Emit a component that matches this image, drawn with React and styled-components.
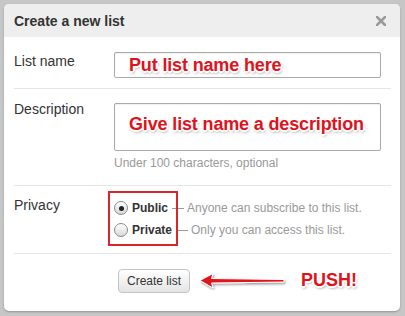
import React from 'react';
import styled, { createGlobalStyle } from 'styled-components';

const GlobalStyle = createGlobalStyle`
  html, body {
    margin: 0;
    padding: 0;
    background: #c6c6c6;
  }
  body {
    font-family: 'Liberation Sans', Arial, sans-serif;
  }
`;

const Frame = styled.div`
  width: 405px;
  height: 316px;
  box-sizing: border-box;
  padding: 4px 5px 5px 4px;
  background: #c6c6c6;
`;

const Modal = styled.div`
  height: 100%;
  background: #fff;
  border-radius: 5px;
  box-shadow: 0 1px 2px rgba(0, 0, 0, 0.25);
  overflow: hidden;
  display: flex;
  flex-direction: column;
`;

const Header = styled.div`
  height: 33px;
  flex-shrink: 0;
  background: #eeeeee;
  display: flex;
  align-items: center;
  justify-content: space-between;
  padding: 0 12px 0 10px;
`;

const Title = styled.h3`
  margin: 0;
  font-size: 14px;
  font-weight: bold;
  color: #333;
`;

const Close = styled.button`
  border: 0;
  background: none;
  padding: 0;
  width: 14px;
  height: 14px;
  display: flex;
  align-items: center;
  justify-content: center;
`;

const Body = styled.div`
  padding: 0 9px 0 10px;
`;

const Row = styled.div`
  display: flex;
  align-items: flex-start;
  padding: ${(p) => p.$pad};
  border-bottom: 1px solid #e6e6e6;
`;

const Label = styled.label`
  width: 100px;
  flex-shrink: 0;
  font-size: 14px;
  line-height: 18px;
  color: #333;
  margin-top: ${(p) => p.$top || 0}px;
`;

const Column = styled.div`
  display: flex;
  flex-direction: column;
`;

const Field = styled.div`
  width: 267px;
  height: ${(p) => p.$h}px;
  box-sizing: border-box;
  border: 1px solid #a9a9a9;
  border-radius: 2px;
  box-shadow: inset 0 1px 1px rgba(0, 0, 0, 0.06);
  display: flex;
  align-items: center;
  padding: 0 0 ${(p) => p.$pb || 0}px 14px;
`;

const Note = styled.span`
  font-family: 'Liberation Sans', Arial, sans-serif;
  font-size: 18px;
  font-weight: bold;
  letter-spacing: -0.15px;
  color: #e0121b;
  text-shadow:
    -1px -1px 0 #fff, 1px -1px 0 #fff, -1px 1px 0 #fff, 1px 1px 0 #fff,
    0 -2px 0 #fff, 0 2px 0 #fff, -2px 0 0 #fff, 2px 0 0 #fff,
    1px 2px 3px rgba(0, 0, 0, 0.5);
`;

const Hint = styled.div`
  margin-top: 5px;
  font-size: 12px;
  line-height: 15px;
  color: #999;
`;

const Options = styled.div`
  position: relative;
  display: flex;
  flex-direction: column;
  gap: 2px;
  padding: 7px 0 6px 0;
`;

const Option = styled.div`
  display: flex;
  align-items: center;
  height: 20px;
  font-size: 12px;
`;

const Radio = styled.span`
  width: 14px;
  height: 14px;
  box-sizing: border-box;
  border-radius: 50%;
  border: 1px solid #8a8a8a;
  background: linear-gradient(#ffffff, #d8d8d8);
  display: flex;
  align-items: center;
  justify-content: center;
  margin-right: 4px;

  &::after {
    content: '';
    width: 5px;
    height: 5px;
    border-radius: 50%;
    background: ${(p) => (p.$checked ? '#222' : 'transparent')};
  }
`;

const OptionName = styled.b`
  color: #333;
`;

const Dash = styled.span`
  width: 12px;
  height: 1px;
  background: #999;
  margin: 0 3px 0 4px;
`;

const OptionText = styled.span`
  color: #999;
`;

const RedBox = styled.div`
  position: absolute;
  left: -6px;
  top: 0;
  width: 70px;
  height: 55px;
  box-sizing: border-box;
  border: 2px solid #d8262d;
`;

const ButtonRow = styled.div`
  display: flex;
  align-items: center;
  padding: 15px 0 0 104px;
`;

const Button = styled.button`
  height: 24px;
  padding: 0 8px;
  font-family: 'Liberation Sans', Arial, sans-serif;
  font-size: 12px;
  color: #333;
  border: 1px solid #c4c4c4;
  border-radius: 4px;
  background: linear-gradient(#ffffff, #e4e4e4);
`;

const Arrow = styled.svg`
  margin-left: 9px;
  flex-shrink: 0;
`;

const Push = styled(Note)`
  margin-left: 14px;
  margin-top: -2px;
  letter-spacing: 0;
`;

export default function App() {
  return (
    <>
      <GlobalStyle />
      <Frame>
        <Modal>
          <Header>
            <Title>Create a new list</Title>
            <Close aria-label="Close">
              <svg width="10" height="10" viewBox="0 0 10 10">
                <path d="M1 1 L9 9 M9 1 L1 9" stroke="#9a9a9a" strokeWidth="2.6" strokeLinecap="square" />
              </svg>
            </Close>
          </Header>
          <Body>
            <Row $pad="15px 0 10px 0">
              <Label>List name</Label>
              <Field $h={26}>
                <Note>Put list name here</Note>
              </Field>
            </Row>
            <Row $pad="14px 0 14px 0">
              <Label $top={-3}>Description</Label>
              <Column>
                <Field $h={48} $pb={6}>
                  <Note>Give list name a description</Note>
                </Field>
                <Hint>Under 100 characters, optional</Hint>
              </Column>
            </Row>
            <Row $pad="5px 0 7px 0">
              <Label $top={5}>Privacy</Label>
              <Options>
                <RedBox />
                <Option>
                  <Radio $checked />
                  <OptionName>Public</OptionName>
                  <Dash />
                  <OptionText>Anyone can subscribe to this list.</OptionText>
                </Option>
                <Option>
                  <Radio />
                  <OptionName>Private</OptionName>
                  <Dash />
                  <OptionText>Only you can access this list.</OptionText>
                </Option>
              </Options>
            </Row>
            <ButtonRow>
              <Button>Create list</Button>
              <Arrow width="88" height="18" viewBox="0 0 88 18">
                <defs>
                  <filter id="sh" x="-10%" y="-40%" width="130%" height="200%">
                    <feDropShadow dx="1" dy="1.5" stdDeviation="1" floodColor="#000" floodOpacity="0.4" />
                  </filter>
                </defs>
                <path
                  d="M1 8.5 L14 1.5 L12.5 6.5 L85 7.5 L85 10 L12.5 11 L14 16 Z"
                  fill="#e0121b"
                  stroke="#fff"
                  strokeWidth="1"
                  strokeLinejoin="round"
                  filter="url(#sh)"
                />
              </Arrow>
              <Push>PUSH!</Push>
            </ButtonRow>
          </Body>
        </Modal>
      </Frame>
    </>
  );
}
